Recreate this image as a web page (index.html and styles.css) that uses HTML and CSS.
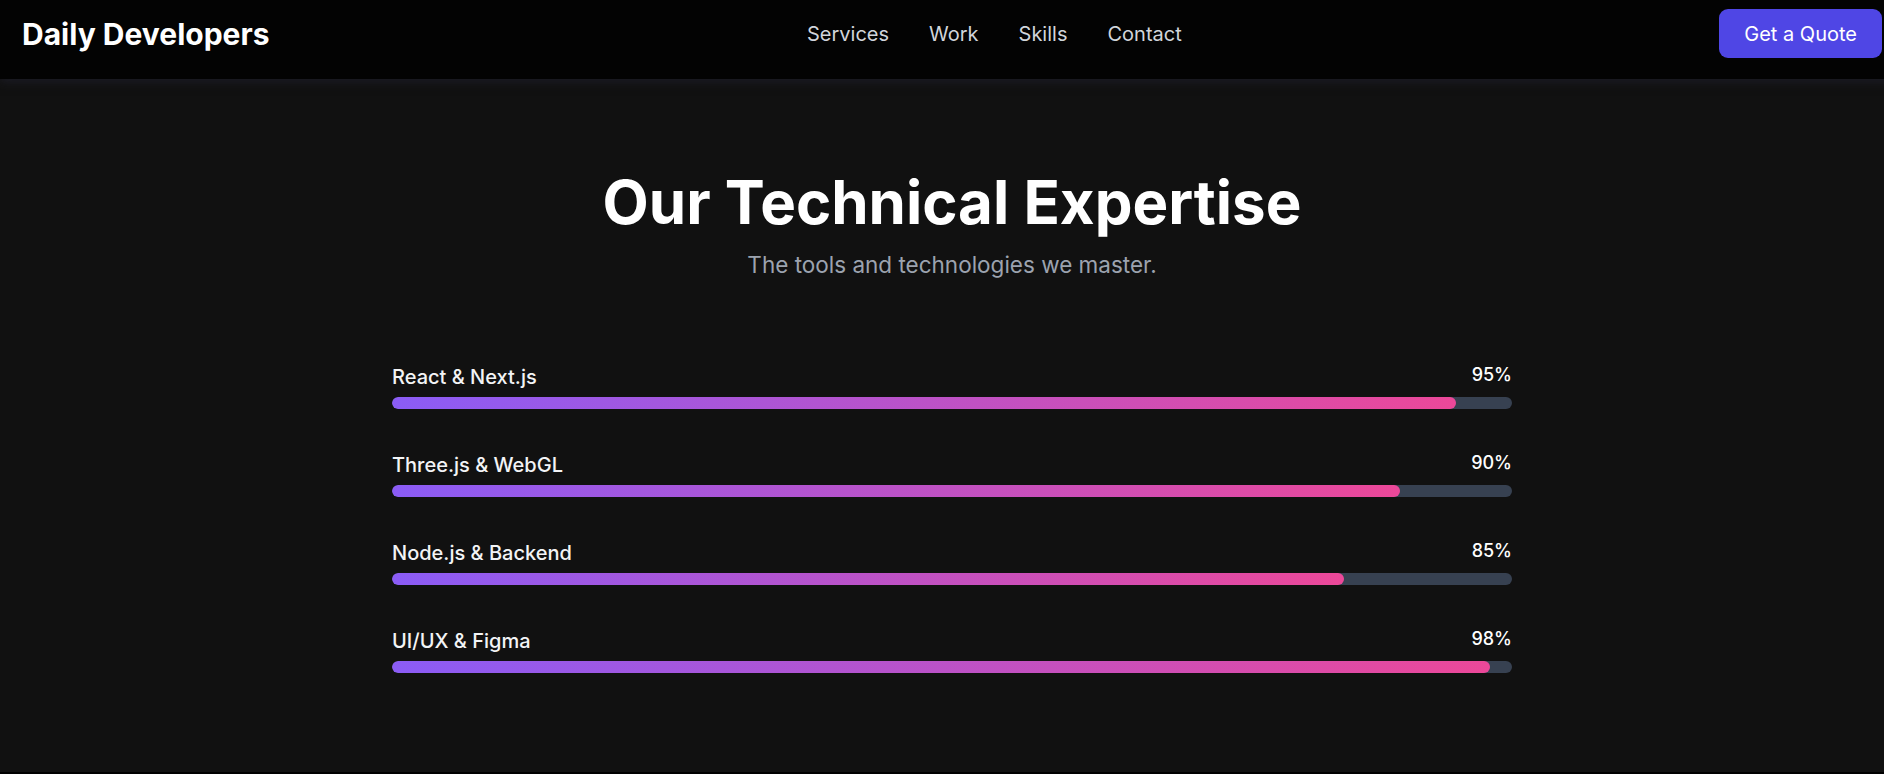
FILE: index.html
```html
<!DOCTYPE html>
<html lang="en">
<head>
<meta charset="utf-8">
<title>Daily Developers</title>
<link rel="stylesheet" href="styles.css">
</head>
<body>
<div class="page">
  <header class="site-header">
    <div class="logo">Daily Developers</div>
    <nav class="nav">
      <a href="#">Services</a>
      <a href="#">Work</a>
      <a href="#">Skills</a>
      <a href="#">Contact</a>
    </nav>
    <a class="quote-btn" href="#">Get a Quote</a>
  </header>
  <section class="skills">
    <h1 class="title">Our Technical Expertise</h1>
    <p class="subtitle">The tools and technologies we master.</p>
    <div class="skill-list">
      <div class="skill">
        <div class="skill-head"><span class="skill-name">React &amp; Next.js</span><span class="skill-pct">95%</span></div>
        <div class="track"><div class="fill" style="width:95%"></div></div>
      </div>
      <div class="skill">
        <div class="skill-head"><span class="skill-name">Three.js &amp; WebGL</span><span class="skill-pct">90%</span></div>
        <div class="track"><div class="fill" style="width:90%"></div></div>
      </div>
      <div class="skill">
        <div class="skill-head"><span class="skill-name">Node.js &amp; Backend</span><span class="skill-pct">85%</span></div>
        <div class="track"><div class="fill" style="width:85%"></div></div>
      </div>
      <div class="skill">
        <div class="skill-head"><span class="skill-name">UI/UX &amp; Figma</span><span class="skill-pct">98%</span></div>
        <div class="track"><div class="fill" style="width:98%"></div></div>
      </div>
    </div>
  </section>
</div>
</body>
</html>
```
FILE: styles.css
```css
html, body {
  margin: 0;
  padding: 0;
  background: #000;
  overflow: hidden;
}
body {
  font-family: Inter, "Liberation Sans", sans-serif;
  color: #fff;
}
.page {
  width: 1904px;
}
.site-header {
  height: 79px;
  box-sizing: border-box;
  padding: 9px 22px 0 22px;
  display: flex;
  justify-content: space-between;
  align-items: flex-start;
  background: #030303;
  position: relative;
  z-index: 1;
  box-shadow: 0 2px 10px rgba(40, 40, 60, 0.55);
}
.logo {
  font-size: 30px;
  font-weight: 700;
  line-height: 50px;
  color: #fff;
}
.nav {
  display: flex;
  gap: 40px;
  line-height: 51px;
}
.nav a {
  font-size: 20px;
  color: #d1d5db;
  text-decoration: none;
}
.quote-btn {
  display: block;
  height: 49px;
  box-sizing: border-box;
  padding: 1px 25px 0;
  line-height: 48px;
  font-size: 20px;
  color: #fff;
  text-decoration: none;
  background: #4f46e5;
  border-radius: 9px;
}
.skills {
  background: #111111;
  padding: 93px 0 99px;
  height: 693px;
  box-sizing: border-box;
}
.title {
  margin: 0 0 19px;
  text-align: center;
  font-size: 60px;
  line-height: 60px;
  font-weight: 700;
  color: #fff;
}
.subtitle {
  margin: 0 0 84px;
  text-align: center;
  font-size: 22.5px;
  line-height: 28px;
  color: #9ca3af;
}
.skill-list {
  width: 1120px;
  margin: 0 auto;
  display: flex;
  flex-direction: column;
  gap: 42px;
}
.skill-head {
  display: flex;
  justify-content: space-between;
  align-items: flex-start;
  margin-bottom: 6px;
}
.skill-name {
  font-size: 20px;
  line-height: 28px;
  font-weight: 500;
  color: #f3f4f6;
}
.skill-pct {
  font-size: 18px;
  line-height: 24px;
  font-weight: 500;
  color: #fff;
}
.track {
  height: 12px;
  border-radius: 6px;
  background: #374151;
  overflow: hidden;
}
.fill {
  height: 100%;
  border-radius: 6px;
  background: linear-gradient(90deg, #8b5cf6, #ec4899);
}
```
